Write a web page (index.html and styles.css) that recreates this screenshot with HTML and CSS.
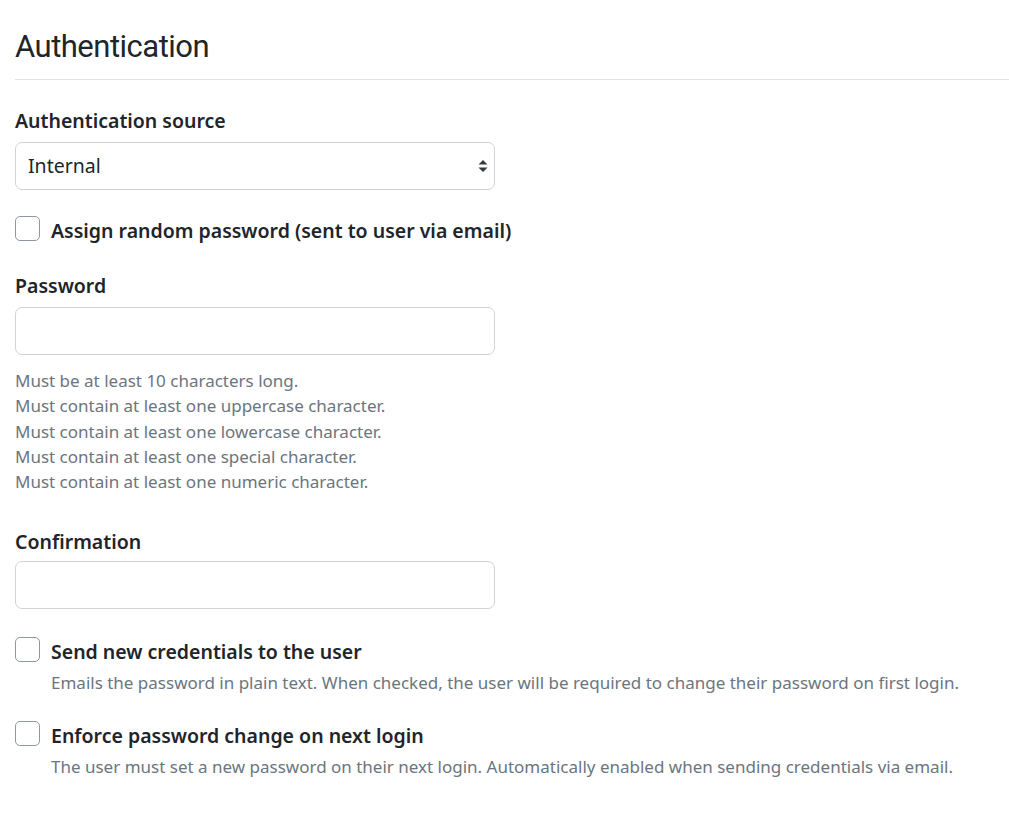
FILE: index.html
```html
<!DOCTYPE html>
<html lang="en">
<head>
<meta charset="utf-8">
<title>Authentication</title>
<link rel="stylesheet" href="styles.css">
</head>
<body>
<main class="page">
  <h3 class="title">Authentication</h3>
  <hr class="rule">

  <div class="group">
    <label class="label" for="src">Authentication source</label>
    <div class="select">
      <span class="select-value">Internal</span>
      <svg class="select-arrow" width="10" height="16" viewBox="0 0 10 16"><path d="M0.5 6.5 L5 2 L9.5 6.5 Z M0.5 9.5 L5 14 L9.5 9.5 Z" fill="#343a40"/></svg>
    </div>
  </div>

  <div class="check check-first">
    <span class="box"></span>
    <span class="check-label">Assign random password (sent to user via email)</span>
  </div>

  <div class="group group-pw">
    <label class="label">Password</label>
    <div class="input"></div>
    <div class="help-list">
      <div>Must be at least 10 characters long.</div>
      <div>Must contain at least one uppercase character.</div>
      <div>Must contain at least one lowercase character.</div>
      <div>Must contain at least one special character.</div>
      <div>Must contain at least one numeric character.</div>
    </div>
  </div>

  <div class="group group-confirm">
    <label class="label">Confirmation</label>
    <div class="input"></div>
  </div>

  <div class="check check-second">
    <span class="box"></span>
    <div class="check-body">
      <span class="check-label">Send new credentials to the user</span>
      <div class="help">Emails the password in plain text. When checked, the user will be required to change their password on first login.</div>
    </div>
  </div>

  <div class="check check-third">
    <span class="box"></span>
    <div class="check-body">
      <span class="check-label">Enforce password change on next login</span>
      <div class="help">The user must set a new password on their next login. Automatically enabled when sending credentials via email.</div>
    </div>
  </div>
</main>
</body>
</html>
```

FILE: styles.css
```css
* { box-sizing: border-box; }
html, body { margin: 0; padding: 0; background: #fff; }
body {
  font-family: "Noto Sans", "Open Sans", sans-serif;
  color: #212529;
  font-size: 19.5px;
  line-height: 30px;
}
.page { padding: 0 0 40px 15px; }

.title {
  margin: 26px 0 0;
  font-family: Roboto, "Noto Sans", sans-serif;
  font-size: 31px;
  line-height: 42px;
  font-weight: 400;
  letter-spacing: -0.5px;
}
.rule {
  margin: 11px 0 0;
  border: 0;
  border-top: 1px solid #dee2e6;
}

.group { display: flex; flex-direction: column; }
.label {
  display: block;
  font-weight: 600;
  font-size: 19.5px;
  line-height: 30px;
  margin-bottom: 6px;
}
.group:first-of-type { margin-top: 26px; }

.select, .input {
  width: 480px;
  height: 48px;
  border: 1px solid #ced4da;
  border-radius: 7px;
  background: #fff;
}
.select {
  display: flex;
  align-items: center;
  justify-content: space-between;
  padding: 0 6px 0 12px;
}
.select-value { font-size: 19.5px; }
.select-arrow { display: block; }

.check { display: flex; align-items: flex-start; gap: 11px; }
.box {
  flex: none;
  width: 25px;
  height: 25px;
  border: 1px solid #8f98a2;
  border-radius: 5px;
  background: #fff;
  margin-top: 0;
}
.check-label {
  font-weight: 600;
  font-size: 19.5px;
  line-height: 30px;
}
.check-body { display: flex; flex-direction: column; }
.help {
  color: #6c757d;
  font-size: 17px;
  line-height: 25px;
  margin-top: 3px;
}
.help-list {
  color: #6c757d;
  font-size: 17px;
  line-height: 25.25px;
  margin-top: 13px;
}

.check-first { margin-top: 26px; }
.group-pw { margin-top: 25px; }
.group-confirm { margin-top: 33px; }
.group-confirm .label { margin-bottom: 4px; }
.check-second { margin-top: 28px; }
.check-third { margin-top: 26px; }
```
